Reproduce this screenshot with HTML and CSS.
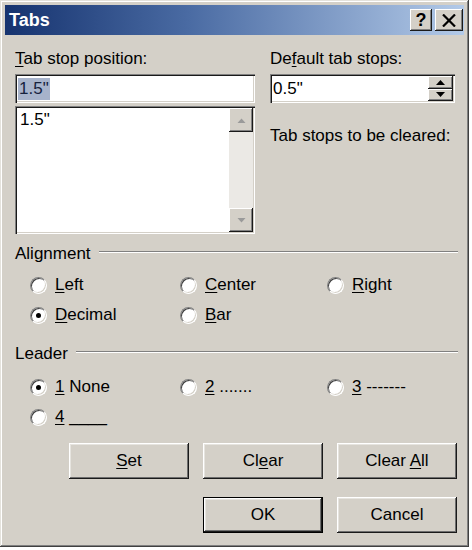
FILE: index.html
```html
<!doctype html>
<html lang="en">

<head>
    <title>Tabs</title>
    <meta charset="UTF-8" />
    <link rel="stylesheet" href="styles.css">
</head>

<body>
    <div class="window">
        <div class="titlebar">
            <span class="title">Tabs</span>
            <span class="tb-btn help">?</span>
            <span class="tb-btn close">
                <svg width="14" height="13" viewBox="0 0 14 13"><path d="M1 0.5 L13 12.5 M13 0.5 L1 12.5" stroke="#000" stroke-width="2.2" /></svg>
            </span>
        </div>

        <div class="content">
            <div class="top">
                <div class="col-left">
                    <div class="label"><u>T</u>ab stop position:</div>
                    <div class="field"><span class="sel">1.5"</span></div>
                    <div class="list">
                        <div class="list-items">1.5"</div>
                        <div class="scrollbar">
                            <span class="sb-btn">
                                <svg width="9" height="5" viewBox="0 0 9 5"><path d="M0.5 5 L4.5 0.5 L8.5 5 Z" fill="#9a9a9a" /></svg>
                            </span>
                            <span class="sb-track"></span>
                            <span class="sb-btn">
                                <svg width="9" height="5" viewBox="0 0 9 5"><path d="M0.5 0 L4.5 4.5 L8.5 0 Z" fill="#9a9a9a" /></svg>
                            </span>
                        </div>
                    </div>
                </div>
                <div class="col-right">
                    <div class="label">De<u>f</u>ault tab stops:</div>
                    <div class="field spin">
                        <span>0.5"</span>
                        <span class="spin-btns">
                            <span class="sp-btn"><svg width="9" height="5" viewBox="0 0 9 5"><path d="M0 5 L4.5 0 L9 5 Z" fill="#000" /></svg></span>
                            <span class="sp-btn"><svg width="9" height="5" viewBox="0 0 9 5"><path d="M0 0 L4.5 5 L9 0 Z" fill="#000" /></svg></span>
                        </span>
                    </div>
                    <div class="label clear-label">Tab stops to be cleared:</div>
                </div>
            </div>

            <div class="group-title"><span>Alignment</span><span class="etch"></span></div>
            <div class="radios">
                <div class="radio"><span class="dot"></span><span><u>L</u>eft</span></div>
                <div class="radio"><span class="dot"></span><span><u>C</u>enter</span></div>
                <div class="radio"><span class="dot"></span><span><u>R</u>ight</span></div>
                <div class="radio"><span class="dot"><span class="pip"></span></span><span><u>D</u>ecimal</span></div>
                <div class="radio"><span class="dot"></span><span><u>B</u>ar</span></div>
            </div>

            <div class="group-title leader"><span>Leader</span><span class="etch"></span></div>
            <div class="radios">
                <div class="radio"><span class="dot"><span class="pip"></span></span><span><u>1</u> None</span></div>
                <div class="radio"><span class="dot"></span><span><u>2</u> .......</span></div>
                <div class="radio"><span class="dot"></span><span><u>3</u> -------</span></div>
                <div class="radio"><span class="dot"></span><span><u>4</u> ____</span></div>
            </div>

            <div class="btn-row">
                <button class="btn"><u>S</u>et</button>
                <button class="btn">Cl<u>e</u>ar</button>
                <button class="btn">Clear <u>A</u>ll</button>
            </div>
            <div class="btn-row second">
                <button class="btn default">OK</button>
                <button class="btn">Cancel</button>
            </div>
        </div>
    </div>
</body>

</html>
```

FILE: styles.css
```css
body {
    margin: 0;
    background: #fff;
    font-family: "Liberation Sans", Arial, sans-serif;
    font-size: 17px;
    color: #000;
}

u {
    text-decoration-thickness: 1px;
    text-underline-offset: 2px;
}

.window {
    width: 469px;
    height: 547px;
    box-sizing: border-box;
    padding: 5px;
    background: #d4d0c8;
    box-shadow: inset -1px -1px #404040, inset 1px 1px #e4e2dc, inset -2px -2px #808080, inset 2px 2px #fff;
    display: flex;
    flex-direction: column;
}

/* title bar */
.titlebar {
    height: 30px;
    display: flex;
    align-items: center;
    gap: 3px;
    padding: 0 1px 0 4px;
    background: linear-gradient(to right, #16336f 0%, #4a6ba3 40%, #b3cae8 100%);
}

.title {
    flex: 1;
    color: #fff;
    font-weight: 700;
    font-size: 18px;
}

.tb-btn {
    width: 22px;
    height: 22px;
    box-sizing: border-box;
    display: flex;
    align-items: center;
    justify-content: center;
    background: #d4d0c8;
    box-shadow: inset -1px -1px #1a1a1a, inset 1px 1px #fff, inset -2px -2px #808080;
    font-weight: 700;
    font-size: 18px;
}

.tb-btn.close {
    width: 28px;
}

/* body of dialog */
.content {
    display: flex;
    flex-direction: column;
    padding: 14px 7px 0 10px;
}

.top {
    display: flex;
    gap: 15px;
}

.col-left {
    width: 240px;
    display: flex;
    flex-direction: column;
}

.col-right {
    width: 187px;
    display: flex;
    flex-direction: column;
}

.label {
    line-height: 20px;
    margin-bottom: 5px;
    white-space: nowrap;
}

.clear-label {
    margin-top: 23px;
}

.field {
    height: 29px;
    box-sizing: border-box;
    background: #fff;
    box-shadow: inset 1px 1px #808080, inset 2px 2px #1a1a1a, inset -1px -1px #fff, inset -2px -2px #d4d0c8;
    display: flex;
    align-items: center;
    padding: 2px 2px 2px 3px;
}

.sel {
    background: #a7b3cb;
    color: #16223e;
    padding: 1px 1px;
    line-height: 20px;
}

.spin {
    width: 185px;
}

.spin-btns {
    margin-left: auto;
    width: 25px;
    height: 25px;
    display: flex;
    flex-direction: column;
}

.sp-btn {
    flex: 1;
    display: flex;
    align-items: center;
    justify-content: center;
    background: #d4d0c8;
    box-shadow: inset -1px -1px #1a1a1a, inset 1px 1px #fff, inset -2px -2px #808080;
}

.list {
    margin-top: 3px;
    height: 128px;
    box-sizing: border-box;
    padding: 2px;
    display: flex;
    background: #fff;
    box-shadow: inset 1px 1px #808080, inset 2px 2px #1a1a1a, inset -1px -1px #fff, inset -2px -2px #d4d0c8;
}

.list-items {
    flex: 1;
    padding: 2px 3px;
    line-height: 20px;
}

.scrollbar {
    width: 24px;
    display: flex;
    flex-direction: column;
    background: #ebe9e5;
}

.sb-btn {
    height: 24px;
    display: flex;
    align-items: center;
    justify-content: center;
    background: #d4d0c8;
    box-shadow: inset -1px -1px #1a1a1a, inset 1px 1px #fff, inset -2px -2px #808080;
}

.sb-track {
    flex: 1;
}

/* groups */
.group-title {
    display: flex;
    align-items: center;
    line-height: 20px;
    margin-top: 10px;
}

.group-title.leader {
    margin-top: 14px;
}

.etch {
    flex: 1;
    height: 0;
    border-top: 1px solid #808080;
    border-bottom: 1px solid #fff;
    margin: 0 -1px 4px 8px;
}

.radios {
    display: grid;
    grid-template-columns: 150px 147px 1fr;
    grid-auto-rows: 30px;
    margin: 6px 0 0 15px;
}

.group-title.leader + .radios {
    margin-top: 8px;
}

.radio {
    display: flex;
    align-items: center;
    gap: 8px;
    white-space: nowrap;
}

.dot {
    width: 17px;
    height: 17px;
    box-sizing: border-box;
    border-radius: 50%;
    border: 1px solid;
    border-color: #808080 #fff #fff #808080;
    background: #fff;
    box-shadow: inset 1px 1px #404040, inset -1px -1px #d4d0c8;
    display: flex;
    align-items: center;
    justify-content: center;
}

.pip {
    width: 5px;
    height: 5px;
    border-radius: 50%;
    background: #000;
}

/* buttons */
.btn-row {
    display: flex;
    justify-content: flex-end;
    gap: 14px;
    margin-top: 11px;
}

.btn-row.second {
    margin-top: 18px;
}

.btn {
    width: 120px;
    height: 36px;
    padding: 0;
    border: none;
    font-family: inherit;
    font-size: 17px;
    color: #000;
    background: #d4d0c8;
    box-shadow: inset -1px -1px #1a1a1a, inset 1px 1px #fff, inset -2px -2px #6e6e6e, inset 2px 2px #e6e4df;
}

.btn.default {
    border: 1px solid #000;
}
```
